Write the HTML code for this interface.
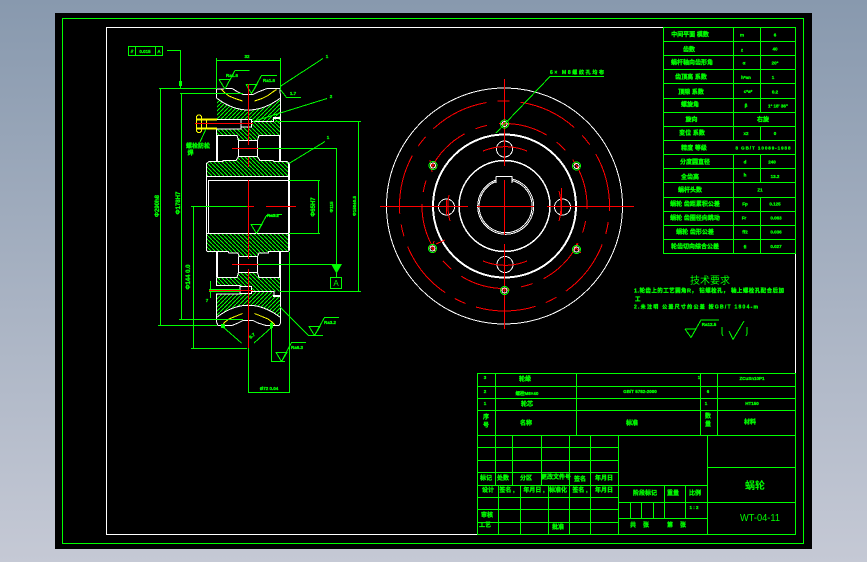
<!DOCTYPE html>
<html><head><meta charset="utf-8"><style>
html,body{margin:0;padding:0;width:867px;height:562px;overflow:hidden;background:linear-gradient(180deg,#8899ae 0%,#c5c9d5 100%)}
svg{position:absolute;left:0;top:0}
.g{stroke:#0f0;fill:none;stroke-width:1;shape-rendering:crispEdges}
.w{stroke:#fff;fill:none;stroke-width:1;shape-rendering:crispEdges}
.w2{stroke:#fff;fill:none;stroke-width:2;shape-rendering:crispEdges}
.r{stroke:#f00;fill:none;stroke-width:1;shape-rendering:crispEdges}
.y{stroke:#ff0;fill:none;stroke-width:1;shape-rendering:crispEdges}
.y2{stroke:#ff0;fill:none;stroke-width:2;shape-rendering:crispEdges}
text{font-family:"Liberation Sans","Noto Sans CJK SC",sans-serif;font-size:6px;font-weight:700;fill:#0f0;stroke:#0f0;stroke-width:.3;text-anchor:middle}
.s{font-size:4.5px}
.l{text-anchor:start}
.big{stroke:none;font-weight:400}
</style></head><body>
<svg width="867" height="562" viewBox="0 0 867 562" xmlns="http://www.w3.org/2000/svg">
<defs>
<pattern id="a" width="4" height="4" patternUnits="userSpaceOnUse"><path d="M-1 5L5 -1" stroke="#0f0" stroke-width="1" shape-rendering="crispEdges"/></pattern>
<pattern id="b" width="4" height="4" patternUnits="userSpaceOnUse"><path d="M-1 -1L5 5" stroke="#0f0" stroke-width="1" shape-rendering="crispEdges"/></pattern>
</defs>
<rect x="55" y="13" width="757" height="536" fill="#000"/>
<rect class="g" x="62.5" y="18.5" width="741" height="525"/>
<path class="w" d="M107 27.5H664M106.5 27V534.5H478M795.5 253V374"/>

<!-- hatches -->
<path fill="url(#a)" d="M217 98.5Q248 121 280 98.5V117H273V122H252V119H217Z"/>
<path fill="url(#b)" d="M217 129H241V127H252V122H273V117H280V135.5H260L258 137L257.500 140H238.500L238 137L236 135.500H217Z"/>
<path fill="url(#b)" d="M207 176.700V163L209 161.300H223V160.300H236L238 157H258L260 160.300H273L274 161.300H287L289 163V176.700Z"/>
<path fill="url(#b)" d="M207 233.500H289V250L287.700 251.700H268.300V253.300L259 254L257.700 256H239L238.300 254L229 253.300L228 252.300H207.300L206.700 250Z"/>
<path fill="url(#b)" d="M217 277.500H237L238.300 272.500H257.700L259 277.500H280V291.500H273V291.500H252V286H241V285.500H217Z"/>
<path fill="url(#a)" d="M217 294H241V293.500H252V291.500H273V296H280V317.300Q248 293 217 317.300Z"/>

<!-- left view white -->
<path class="w" d="M216.500 98V89L232 88.500L238 92L243 94.500H253L258 92L267 88.500H280L280.500 98"/>
<path class="w" d="M216.500 98Q248 122 280.500 98"/>
<path class="w" d="M216.500 119.500H241V129H216.500M241.500 119.500H251.500V127H241.500M252 121.500H273.500V117.500H280.500"/>
<path class="w2" d="M273 118H280"/>
<path class="w" d="M280.500 98V135M216.500 129V135.500H237L238.500 140.500H257.500L259 135.500H280.500"/>
<path class="w2" d="M217 135V161M280 135V161M217 252V277M280 252V277"/>
<path class="w" d="M238.500 140.500V156.500M257.500 140.500V156.500M238.500 156.500H257.500"/>
<path class="w" d="M238.500 156.500L236 160.500H223V161.500H209L206.500 163.500V250.500L207.500 251.500H228L229 253H238L239 256.500H257.500L259 253H268.500V251.500H288L289.500 250V163.500L287 161.500H274L273 160.500H260L257.500 156.500"/>
<path class="w" d="M207 176.500H289M208 180.500H289M208.500 180V233.500H289M207 233.500H289"/>
<path class="w2" d="M289 163V250"/>
<path class="w" d="M238.500 256.500V272.500M257.500 256.500V272.500M238.500 272.500H257.500"/>
<path class="w" d="M216.500 277.500H237L238.500 272.500M257.500 272.500L259 277.500H280.500V317.500M216.500 277.500V285.500H240V294H216.500V317.500"/>
<path class="w" d="M240.500 286.500H251.500V293.500H240.500M251.500 291.500H274V296H280.500"/>
<path class="w2" d="M273 296H280"/>
<path class="w" d="M216.500 317.500V322L218 325.500H232L238 323L243 320.500H253L258 323L266 325.500H279L280.500 323V317.500"/>
<path class="w" d="M216.500 317.500Q248 293 280.500 317.500"/>

<!-- bolt yellow -->
<path class="y2" d="M197 119.500H217M197 128.500H217"/>
<path class="y" d="M206.500 119V129M196.500 116.500L198 115H200L201.500 116.500V131L200 132.500H198L196.500 131ZM196.500 120H201.500M196.500 128H201.500"/>
<path class="y" d="M221.500 89.500L225 93L229 96L235 98.500L242.500 101M254.500 101L262 98.500L268 95.500L272 92.500L276.500 89.500M222.500 325L225 322L229 319L235 316.500L242.500 313.500M254.500 313.500L262 316.500L268 319L272 322L275 325"/>

<!-- green dims left -->
<rect class="g" x="128.500" y="46.500" width="34" height="9"/>
<path class="g" d="M135.500 46V55M155.500 46V55M167 50.500H180.500V88"/>
<rect x="179" y="81" width="3" height="5" fill="#0f0"/>
<path class="g" d="M159 88.500H217M160.500 88V325M158 325.500H217M180 93.500H243M181.500 93V319M179 319.500H243"/>
<path class="g" d="M193.500 206V348M191 206.500H247M191 348.500H247"/>
<path class="g" d="M216.500 58V89M280.500 58V89M217 60.500H280"/>
<path class="g" d="M280 86.500L323 58.500M253 121.500L327 98.500M289 163.500L325 141.500"/>
<path class="g" d="M258 148.500H337M336.500 148V265M258 264.500H337"/>
<path class="g" d="M275 121.500H361M358.500 121V291M280 291.500H361M289 180.500H320M318.500 180V233M289 233.500H320"/>
<path class="g" d="M280 89L286.500 97.500H301M206 129L200 142"/>
<path class="g" d="M219 79.500H230L225 89L235 70.500H249.500M246 84.500H257L251.500 93.500L246 84.500M251.500 93.500L261.500 75.500H277M219 79.500L225 89"/>
<path class="g" d="M251 224.500H262L256.500 233.500ZM256.500 233.500L266.500 215.500L282 214.500"/>
<path class="g" d="M280 307L308.500 335.500H323M309 326.500H320L314.500 335.500ZM314.500 335.500L324.500 317.500H339"/>
<path class="g" d="M271.500 322V361.500H285M276 352.500H287L281.500 361.500ZM281.500 361.500L291.500 342.500H306"/>
<path class="g" d="M248.500 348V393M289.500 252V393M249 392.500H289"/>
<path class="g" d="M223 327L241.500 343M272 327L254 343M210.500 281V298M209 289.500H240M209 291.500H240"/>
<path fill="#0f0" d="M331 264H342L336.500 273.500Z"/>
<rect class="g" x="330.500" y="277.500" width="11" height="11"/>
<path class="g" d="M336.500 273V277"/>
<rect x="221" y="324" width="4" height="4" fill="#0f0"/><rect x="270" y="323" width="3" height="5" fill="#0f0"/>

<!-- red left -->
<path class="r" d="M248.500 84V145M248.500 157V167M248.500 180V259M248.500 269V348M232 148.500H258M232 264.500H258M247 206.500H254M266 206.500H296M195 123.500H253M209 290.500H253"/>

<!-- right view -->
<circle class="w" cx="504.500" cy="206" r="118"/>
<circle class="w2" cx="504.500" cy="206" r="71.500"/>
<circle class="w" cx="504.500" cy="206" r="45.500" style="stroke-width:1.500"/>
<path class="w" d="M496 176.500H512V183M496 176.500V183"/>
<path class="w" d="M496 180A28 28 0 1 0 512 179M496 181.500A26.500 26.500 0 1 0 512 180.500"/>
<circle class="w" cx="504.500" cy="149" r="8"/>
<circle class="w" cx="505" cy="264.500" r="8"/>
<circle class="w" cx="446.500" cy="207" r="8"/>
<circle class="w" cx="562.500" cy="207" r="8"/>
<circle class="r" cx="504.500" cy="206" r="105" stroke-dasharray="60 11.150 12 11.150" stroke-dashoffset="55"/>
<circle class="r" cx="504.500" cy="206" r="82.500" stroke-dasharray="50 12 12 12" stroke-dashoffset="47"/>
<path class="r" d="M483 151A58 58 0 0 1 527 151M483 261A58 58 0 0 0 527 261M450 221A58 58 0 0 1 449 195M559 221A58 58 0 0 0 559 191"/>
<path class="r" d="M380 206.500H468M477 206.500H534M547 206.500H634M504.500 79V166M504.500 180V235M504.500 244V329"/>
<path class="r" d="M446.500 200V215M561.500 188V215"/>
<path class="r" d="M430 163L437 168M574 163L580 169M574 246L581 253M429 246L436 252M500 124H510M500 290H510M434 241L432 248M577 243L575 250M436 244L445 240M430 160L432 172"/>
<g class="g">
<circle class="g" cx="504.500" cy="124" r="4"/>
<circle class="g" cx="576.500" cy="166" r="4"/>
<circle class="g" cx="576.500" cy="249.500" r="4"/>
<circle class="g" cx="504.500" cy="290.500" r="4"/>
<circle class="g" cx="432.500" cy="248.500" r="4"/>
<circle class="g" cx="433" cy="165.500" r="4"/>
</g>
<circle class="w" cx="504.500" cy="124" r="2.500"/><circle class="w" cx="576.500" cy="166" r="2.500"/><circle class="w" cx="576.500" cy="249.500" r="2.500"/><circle class="w" cx="504.500" cy="290.500" r="2.500"/><circle class="w" cx="432.500" cy="248.500" r="2.500"/><circle class="w" cx="433" cy="165.500" r="2.500"/>
<path class="g" d="M496 133L550 76.500H604"/>

<!-- table -->
<path class="g" d="M663.500 27V254M795.500 27V254M663 27.500H796M663 41.500H796M663 55.500H796M663 69.500H796M663 83.500H796M663 98.500H796M663 112.500H796M663 126.500H796M663 140.500H796M663 154.500H796M663 168.500H796M663 182.500H796M663 197.500H796M663 211.500H796M663 225.500H796M663 239.500H796M663 253.500H796"/>
<path class="g" d="M733.500 27V140M733.500 154V254M760.500 27V112M760.500 126V140M760.500 154V182M760.500 197V254"/>
<g>
<text x="690" y="36.500">中间平面 模数</text><text x="742" y="36.500" class="s">m</text><text x="775" y="36.500" class="s">6</text>
<text x="689" y="51.500">齿数</text><text x="742" y="51.500" class="s">z</text><text x="775" y="50.500" class="s">40</text>
<text x="692" y="64.500">蜗杆轴向齿形角</text><text x="744" y="64.500" class="s">α</text><text x="775" y="64.500" class="s">20°</text>
<text x="691" y="79">齿顶高 系数</text><text x="746" y="79" class="s">h*an</text><text x="773" y="79" class="s">1</text>
<text x="691" y="94">顶隙 系数</text><text x="748" y="93" class="s">c*a*</text><text x="775" y="93.500" class="s">0.2</text>
<text x="690" y="106.500">螺旋角</text><text x="746" y="107" class="s">β</text><text x="778" y="107.500" class="s">1° 18' 36"</text>
<text x="691.500" y="121.500">旋向</text><text x="763" y="121.500">右旋</text>
<text x="692" y="135">变位 系数</text><text x="746" y="135" class="s">x2</text><text x="775" y="135" class="s">0</text>
<text x="694" y="150">精度 等级</text><text x="763" y="149.500" class="s" textLength="55">8 GB/T 10089-1988</text>
<text x="695" y="164">分度圆直径</text><text x="745" y="163.500" class="s">d</text><text x="772" y="163.500" class="s">240</text>
<text x="690" y="179">全齿高</text><text x="745" y="176.500" class="s">h</text><text x="775" y="178" class="s">13.2</text>
<text x="690" y="192">蜗杆头数</text><text x="760" y="191.500" class="s">Z1</text>
<text x="695" y="206">蜗轮 齿距累积公差</text><text x="745" y="205.500" class="s">Fp</text><text x="775" y="205.500" class="s">0.125</text>
<text x="695" y="220">蜗轮 齿圈径向跳动</text><text x="744" y="219.500" class="s">Fr</text><text x="776" y="219.500" class="s">0.063</text>
<text x="695" y="234">蜗轮 齿形公差</text><text x="745" y="233.500" class="s">ff2</text><text x="776" y="233.500" class="s">0.036</text>
<text x="695" y="248.500">轮齿切向综合公差</text><text x="745" y="248.500" class="s">fi</text><text x="776" y="248" class="s">0.027</text>
</g>

<!-- tech reqs -->
<text x="710" y="284" class="big" style="font-size:10px">技术要求</text>
<text x="634" y="292.500" class="l" textLength="150" style="font-size:5.500px">1.轮齿上的工艺圆角R， 钻螺栓孔， 轴上螺栓孔配合后加</text>
<text x="635" y="301" class="l" style="font-size:5.500px">工</text>
<text x="634" y="308.500" class="l" textLength="124" style="font-size:5px">2.未注明 公差尺寸的公差 按GB/T 1804-m</text>
<path class="g" d="M685 329H696L691 337.500L685 329M691 337.500L701 320H719"/>
<text x="709" y="326" class="s">Ra12.5</text>
<path class="g" d="M722 327V334L723 336M747 327V334L746 336M729 331L733 339.500L744 321"/>

<!-- parts -->
<path class="g" d="M477.500 373.500H796M477.500 386.500H796M477.500 398.500H796M477.500 410.500H796M477.500 435.500H796"/>
<path class="g" d="M477.500 373V534M495.500 373V435M576.500 373V435M700.500 373V435M717.500 373V435M795.500 373V535"/>
<text x="485" y="379" class="s">3</text><text x="525" y="381">轮缘</text><text x="699" y="379" class="s">1</text><text x="752" y="380" class="s">ZCuSn10P1</text>
<text x="485" y="393" class="s">2</text><text x="527" y="395" class="s">螺栓M8×40</text><text x="640" y="393" class="s">GB/T 5782-2000</text><text x="708" y="393" class="s">6</text>
<text x="485" y="405" class="s">1</text><text x="527" y="406">轮芯</text><text x="706" y="405" class="s">1</text><text x="752" y="405" class="s">HT150</text>
<text x="486" y="419">序</text><text x="486" y="427">号</text><text x="526" y="425">名称</text><text x="632" y="425">标准</text><text x="708" y="418">数</text><text x="708" y="426">量</text><text x="750" y="424">材料</text>

<!-- title -->
<path class="g" d="M477 447.500H618M477 460.500H618M477 472.500H618M477 485.500H618M477 497.500H618M477 509.500H618M477 522.500H618M477 534.500H796"/>
<path class="g" d="M495.500 435V485M512.500 435V485M541.500 435V485M569.500 435V485M590.500 435V485M618.500 435V534M498.500 485V534M520.500 485V534M548.500 485V534M569.500 485V534M590.500 485V534"/>
<path class="g" d="M707.500 435V534M707 467.500H796M707 502.500H796M618 485.500H707M618 502.500H707M618 518.500H707M664.500 485V518M685.500 485V518M630.500 502V518M641.500 502V518M653.500 502V518"/>
<text x="486" y="480">标记</text><text x="503" y="480">处数</text><text x="526" y="480">分区</text><text x="556" y="479">更改文件号</text><text x="580" y="481">签名</text><text x="604" y="480">年月日</text>
<text x="488" y="492">设计</text><text x="507" y="492">签名 ,</text><text x="534" y="492">年月日 ,</text><text x="558" y="492">标准化</text><text x="580" y="492">签名 ,</text><text x="604" y="492">年月日</text>
<text x="487" y="517">审核</text><text x="485" y="527">工艺</text><text x="558" y="529">批准</text>
<text x="645" y="495">阶段标记</text><text x="673" y="495">重量</text><text x="695" y="495">比例</text><text x="694" y="509" class="s">1 : 2</text>
<text x="633" y="527">共</text><text x="646" y="527">张</text><text x="670" y="527">第</text><text x="683" y="527">张</text>
<text x="755" y="489" style="font-size:10px;stroke:none">蜗轮</text>
<text x="760" y="521" class="big" style="font-size:10px" textLength="40" lengthAdjust="spacingAndGlyphs">WT-04-11</text>

<!-- left dim texts -->
<text x="247" y="58" class="s">32</text>
<text x="232" y="77" class="s">Ra1.6</text><text x="269" y="82" class="s">Ra1.6</text><text x="293" y="95" class="s">1.7</text><text x="267" y="217" class="l s">Ra3.2</text>
<text x="327" y="58" class="s">1</text><text x="331" y="98" class="s">2</text><text x="328" y="139" class="s">1</text>
<text x="145" y="53" class="s">0.015</text><text x="132" y="53" class="s">∥</text><text x="159" y="53" class="s">A</text>
<text x="198" y="148">螺栓防松</text><text x="190.500" y="155">焊</text>
<text x="336" y="286" class="big" style="font-size:8px">A</text>
<text x="577" y="74" textLength="54" style="font-size:5px">6× M8螺纹孔均布</text>
<text x="159" y="206" transform="rotate(-90 159 206)">Φ290h8</text>
<text x="181" y="208" transform="rotate(-90 178 206)">Φ178H7</text>
<text x="191" y="278" transform="rotate(-90 190 278)">Φ144 0.0</text>
<text x="315" y="207" transform="rotate(-90 315 207)">Φ65H7</text>
<text x="333" y="207" class="s" transform="rotate(-90 333 207)">Φ115</text>
<text x="356" y="206" class="s" transform="rotate(-90 356 206)">Φ150±0.5</text>
<text x="207" y="302" class="s">7</text>
<text x="269" y="390" class="s">Ø72 0.04</text>
<text x="253" y="337" class="s" transform="rotate(-40 253 337)">6.7</text>
<text x="324" y="324" class="l s">Ra3.2</text><text x="291" y="349" class="l s">Ra6.3</text>
</svg>
</body></html>
